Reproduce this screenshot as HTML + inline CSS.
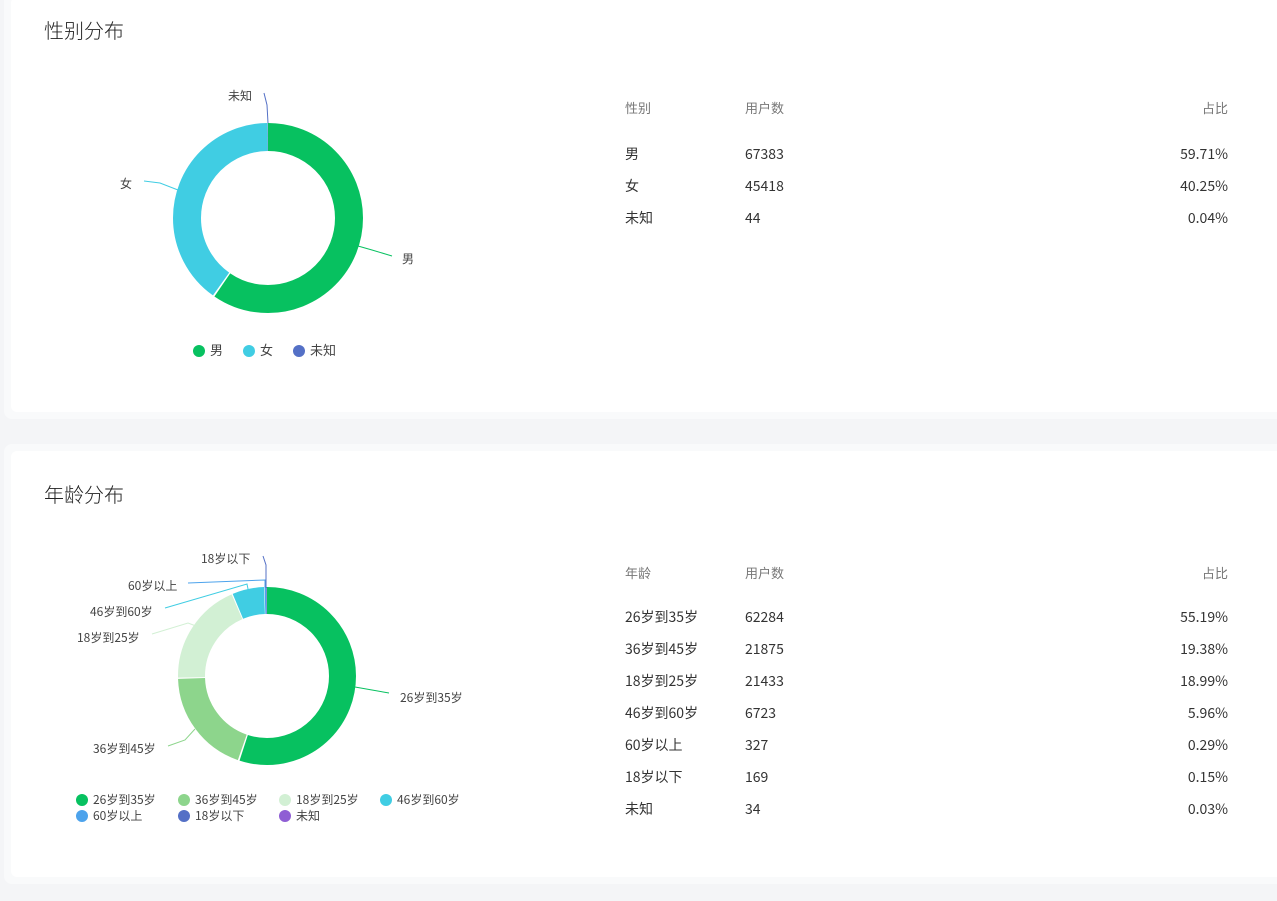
<!DOCTYPE html>
<html><head><meta charset="utf-8"><style>
body{margin:0;width:1277px;height:901px;background:#f4f5f7;font-family:"Noto Sans CJK SC","Liberation Sans",sans-serif;position:relative;overflow:hidden;color:#333}
.card{position:absolute;left:4px;width:1280px;background:#f9fafb;border-radius:8px}
.in{position:absolute;left:7px;right:0;top:7px;bottom:7px;background:#fff;border-radius:6px}
.t{position:absolute;font-size:20px;line-height:28px;color:#222;font-weight:300}
.a{position:absolute;font-size:14px;line-height:20px;white-space:nowrap}
.h{color:#777;font-size:13px}
.r{text-align:right;width:120px}
.lg{position:absolute;font-size:12px;line-height:16px;color:#444;white-space:nowrap}
.dot{display:inline-block;width:12px;height:12px;border-radius:6px;vertical-align:-2px;margin-right:5px}
</style></head><body>
<div class="card" style="top:-10px;height:429px"><div class="in"></div></div>
<div class="card" style="top:444px;height:440px"><div class="in"></div></div>
<div class="t" style="left:44px;top:16px">性别分布</div>
<div class="t" style="left:44px;top:480px">年龄分布</div>
<svg style="position:absolute;left:0;top:0" width="600" height="901">
<g transform="translate(268,218) rotate(-90)" fill="none" stroke-width="28">
<circle r="81" stroke="#07c160" stroke-dasharray="302.9 1000"/>
<circle r="81" stroke="#40cde3" stroke-dasharray="203.8 1000" stroke-dashoffset="-304.4"/>
<circle r="81" stroke="#5470c6" stroke-dasharray="0.6 1000" stroke-dashoffset="-508.4"/>
</g>
<g fill="none" stroke-width="1">
<path d="M358,246 L372,250 L392,256" stroke="#07c160"/>
<path d="M178,190 L160,183 L144,181" stroke="#40cde3"/>
<path d="M268,123 L267,105 L264,93" stroke="#5470c6"/>
</g>
<g transform="translate(267,676) rotate(-90)" fill="none" stroke-width="27">
<circle r="75.5" stroke="#07c160" stroke-dasharray="260.8 1000"/>
<circle r="75.5" stroke="#8dd58c" stroke-dasharray="90.9 1000" stroke-dashoffset="-262.3"/>
<circle r="75.5" stroke="#d2f0d4" stroke-dasharray="89.1 1000" stroke-dashoffset="-354.2"/>
<circle r="75.5" stroke="#40cde3" stroke-dasharray="27.3 1000" stroke-dashoffset="-444.3"/>
<circle r="75.5" stroke="#4da3ec" stroke-dasharray="1.2 1000" stroke-dashoffset="-472.1"/>
<circle r="75.5" stroke="#5470c6" stroke-dasharray="0.7 1000" stroke-dashoffset="-473.5"/>
</g>
<g fill="none" stroke-width="1">
<path d="M355,687 L372,690 L389,693" stroke="#07c160"/>
<path d="M195,729 L185,740 L168,746" stroke="#8dd58c"/>
<path d="M196,626 L188,623 L152,634" stroke="#d2f0d4"/>
<path d="M249,594 L247,584 L165,608" stroke="#40cde3"/>
<path d="M265,588 L265,580 L188,583" stroke="#4da3ec"/>
<path d="M266,588 L266,565 L263,556" stroke="#5470c6"/>
</g>
</svg>
<div class="lg" style="left:120px;top:176px">女</div>
<div class="lg" style="left:402px;top:251px">男</div>
<div class="lg" style="left:228px;top:88px">未知</div>
<div class="lg" style="left:193px;top:342px;font-size:13px"><span class="dot" style="background:#07c160"></span>男<span class="dot" style="background:#40cde3;margin-left:20px"></span>女<span class="dot" style="background:#5470c6;margin-left:20px"></span>未知</div>
<div class="lg" style="left:400px;top:690px">26岁到35岁</div>
<div class="lg" style="left:93px;top:741px">36岁到45岁</div>
<div class="lg" style="left:77px;top:630px">18岁到25岁</div>
<div class="lg" style="left:90px;top:604px">46岁到60岁</div>
<div class="lg" style="left:128px;top:578px">60岁以上</div>
<div class="lg" style="left:201px;top:551px">18岁以下</div>
<div class="lg" style="left:76px;top:792px"><span class="dot" style="background:#07c160"></span>26岁到35岁</div>
<div class="lg" style="left:178px;top:792px"><span class="dot" style="background:#8dd58c"></span>36岁到45岁</div>
<div class="lg" style="left:279px;top:792px"><span class="dot" style="background:#d2f0d4"></span>18岁到25岁</div>
<div class="lg" style="left:380px;top:792px"><span class="dot" style="background:#40cde3"></span>46岁到60岁</div>
<div class="lg" style="left:76px;top:808px"><span class="dot" style="background:#4da3ec"></span>60岁以上</div>
<div class="lg" style="left:178px;top:808px"><span class="dot" style="background:#5470c6"></span>18岁以下</div>
<div class="lg" style="left:279px;top:808px"><span class="dot" style="background:#8f5ed4"></span>未知</div>

<div class="a h" style="left:625px;top:98px">性别</div><div class="a h" style="left:745px;top:98px">用户数</div><div class="a h r" style="left:1108px;top:98px">占比</div>
<div class="a" style="left:625px;top:144px">男</div><div class="a" style="left:745px;top:144px">67383</div><div class="a r" style="left:1108px;top:144px">59.71%</div>
<div class="a" style="left:625px;top:176px">女</div><div class="a" style="left:745px;top:176px">45418</div><div class="a r" style="left:1108px;top:176px">40.25%</div>
<div class="a" style="left:625px;top:208px">未知</div><div class="a" style="left:745px;top:208px">44</div><div class="a r" style="left:1108px;top:208px">0.04%</div>

<div class="a h" style="left:625px;top:563px">年龄</div><div class="a h" style="left:745px;top:563px">用户数</div><div class="a h r" style="left:1108px;top:563px">占比</div>
<div class="a" style="left:625px;top:607px">26岁到35岁</div><div class="a" style="left:745px;top:607px">62284</div><div class="a r" style="left:1108px;top:607px">55.19%</div>
<div class="a" style="left:625px;top:639px">36岁到45岁</div><div class="a" style="left:745px;top:639px">21875</div><div class="a r" style="left:1108px;top:639px">19.38%</div>
<div class="a" style="left:625px;top:671px">18岁到25岁</div><div class="a" style="left:745px;top:671px">21433</div><div class="a r" style="left:1108px;top:671px">18.99%</div>
<div class="a" style="left:625px;top:703px">46岁到60岁</div><div class="a" style="left:745px;top:703px">6723</div><div class="a r" style="left:1108px;top:703px">5.96%</div>
<div class="a" style="left:625px;top:735px">60岁以上</div><div class="a" style="left:745px;top:735px">327</div><div class="a r" style="left:1108px;top:735px">0.29%</div>
<div class="a" style="left:625px;top:767px">18岁以下</div><div class="a" style="left:745px;top:767px">169</div><div class="a r" style="left:1108px;top:767px">0.15%</div>
<div class="a" style="left:625px;top:799px">未知</div><div class="a" style="left:745px;top:799px">34</div><div class="a r" style="left:1108px;top:799px">0.03%</div>
</body></html>
